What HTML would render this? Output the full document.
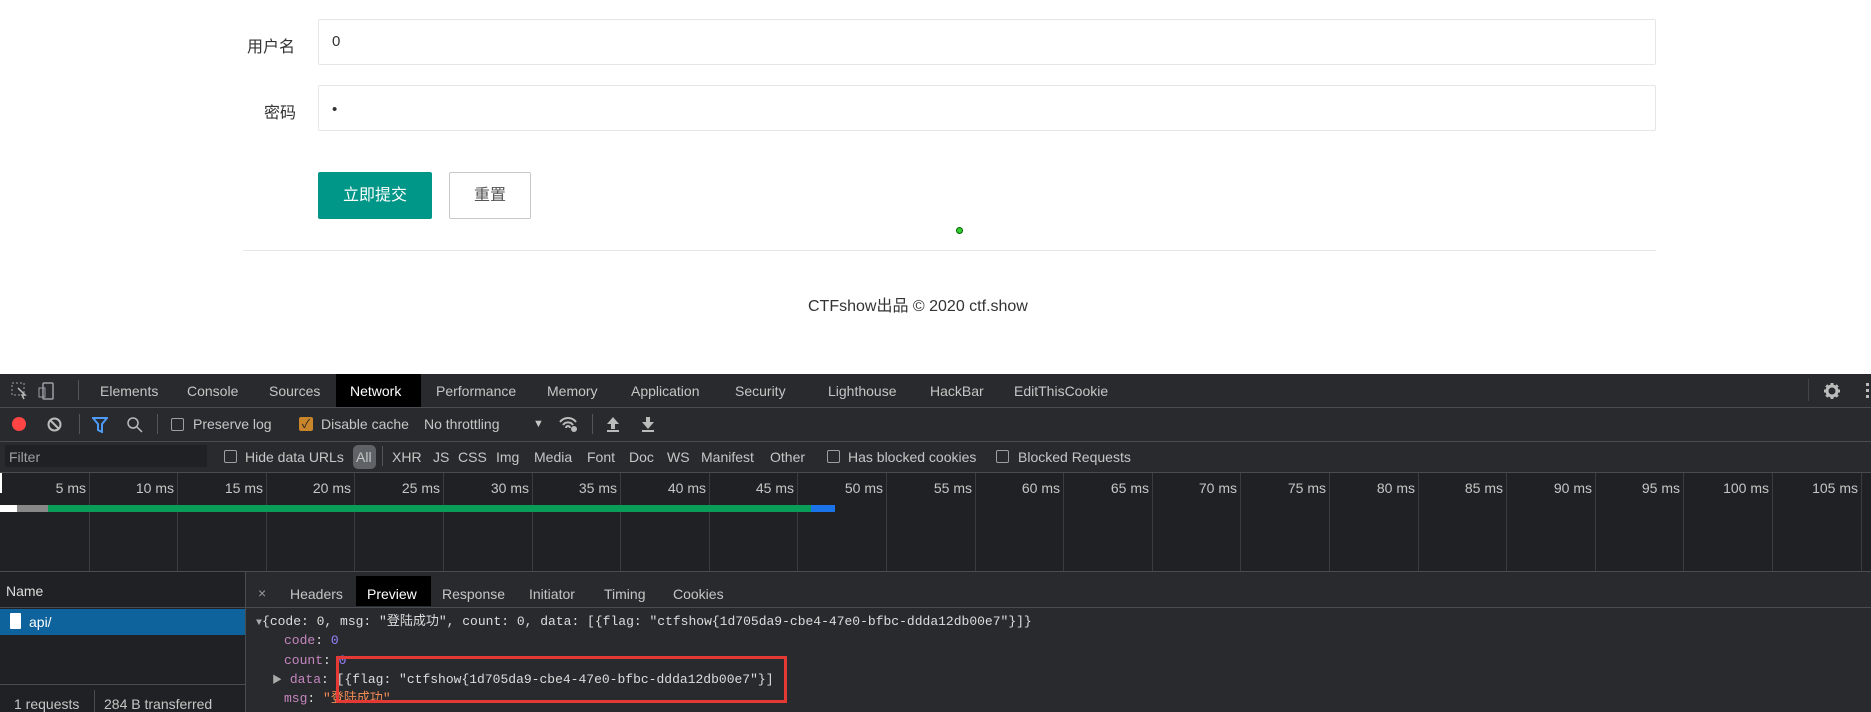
<!DOCTYPE html>
<html><head><meta charset="utf-8"><style>
*{margin:0;padding:0;box-sizing:border-box}
body{width:1871px;height:712px;overflow:hidden;background:#fff;font-family:"Liberation Sans","Noto Sans CJK SC",sans-serif;position:relative}
.a{position:absolute;white-space:nowrap}
.dt{position:absolute;left:0;top:374px;width:1871px;height:338px;background:#292a2d;color:#c4c7c5;font-size:14px}
.dt .a{line-height:1}
.hl{position:absolute;left:0;width:1871px;height:1px;background:#494c50}
.cb{position:absolute;width:13px;height:13px;border:1px solid #9aa0a6;border-radius:2px}
.mono{font-family:"Liberation Mono","Noto Sans CJK SC",monospace;font-size:13px}
</style></head><body>
<div class="a" style="left:247px;top:33px;font-size:16px;color:#333">用户名</div>
<div class="a" style="left:318px;top:19px;width:1338px;height:46px;border:1px solid #e6e6e6;border-radius:2px"></div>
<div class="a" style="left:332px;top:33px;font-size:15px;color:#333">0</div>
<div class="a" style="left:264px;top:99px;font-size:16px;color:#333">密码</div>
<div class="a" style="left:318px;top:85px;width:1338px;height:46px;border:1px solid #e6e6e6;border-radius:2px"></div>
<div class="a" style="left:332px;top:101px;font-size:15px;color:#333">•</div>
<div class="a" style="left:318px;top:172px;width:114px;height:47px;background:#009688;border-radius:2px;color:#fff;font-size:16px;text-align:center;line-height:47px">立即提交</div>
<div class="a" style="left:449px;top:172px;width:82px;height:47px;border:1px solid #c9c9c9;border-radius:2px;color:#555;font-size:16px;text-align:center;line-height:45px">重置</div>
<div class="a" style="left:956px;top:227px;width:7px;height:7px;border-radius:50%;background:#3c3;border:1px solid #060"></div>
<div class="a" style="left:243px;top:250px;width:1413px;height:1px;background:#e6e6e6"></div>
<div class="a" style="left:808px;top:292px;font-size:16px;color:#333">CTFshow出品 © 2020 ctf.show</div>

<div class="dt">
 <svg class="a" style="left:10px;top:8px" width="50" height="18"><rect x="2" y="1" width="12" height="12" fill="none" stroke="#9aa0a6" stroke-dasharray="2 2"/><path d="M8 6l7 7-3 0 2 4" stroke="#bbb" fill="none" stroke-width="1.5"/><rect x="33" y="1" width="10" height="16" rx="1" fill="none" stroke="#9aa0a6" stroke-width="1.5"/><rect x="29" y="6" width="6" height="9" fill="none" stroke="#9aa0a6"/></svg>
 <div class="a" style="left:78px;top:6px;width:1px;height:20px;background:#555"></div>
 <div class="a" style="left:336px;top:0;width:85px;height:33px;background:#000"></div>
 <div class="a" style="left:100px;top:10px">Elements</div>
 <div class="a" style="left:187px;top:10px">Console</div>
 <div class="a" style="left:269px;top:10px">Sources</div>
 <div class="a" style="left:350px;top:10px;color:#fff">Network</div>
 <div class="a" style="left:436px;top:10px">Performance</div>
 <div class="a" style="left:547px;top:10px">Memory</div>
 <div class="a" style="left:631px;top:10px">Application</div>
 <div class="a" style="left:735px;top:10px">Security</div>
 <div class="a" style="left:828px;top:10px">Lighthouse</div>
 <div class="a" style="left:930px;top:10px">HackBar</div>
 <div class="a" style="left:1014px;top:10px">EditThisCookie</div>
 <div class="a" style="left:1808px;top:5px;width:1px;height:22px;background:#444"></div>
 <svg class="a" style="left:1823px;top:8px" width="18" height="18" viewBox="0 0 18 18"><circle cx="9" cy="9" r="5" fill="none" stroke="#bbb" stroke-width="3"/><g stroke="#bbb" stroke-width="3"><path d="M9 1v3M9 14v3M1 9h3M14 9h3M3.3 3.3l2 2M12.7 12.7l2 2M3.3 14.7l2-2M12.7 5.3l2-2"/></g></svg>
 <div class="a" style="left:1866px;top:9px;width:3px;height:3px;background:#bbb;box-shadow:0 6px #bbb,0 12px #bbb"></div>
 <div class="hl" style="top:33px"></div>
 <div class="a" style="left:12px;top:43px;width:14px;height:14px;border-radius:50%;background:#f44"></div>
 <svg class="a" style="left:47px;top:43px" width="15" height="15"><circle cx="7.5" cy="7.5" r="6" fill="none" stroke="#bbb" stroke-width="2"/><path d="M3.5 3.5l8 8" stroke="#bbb" stroke-width="2"/></svg>
 <div class="a" style="left:79px;top:40px;width:1px;height:20px;background:#555"></div>
 <svg class="a" style="left:92px;top:43px" width="16" height="16"><path d="M1 1h14l-5 6v8l-4-2v-6z" fill="none" stroke="#4e9bf5" stroke-width="2"/></svg>
 <svg class="a" style="left:127px;top:43px" width="16" height="16"><circle cx="6" cy="6" r="5" fill="none" stroke="#bbb" stroke-width="1.5"/><path d="M10 10l5 5" stroke="#bbb" stroke-width="1.5"/></svg>
 <div class="a" style="left:157px;top:40px;width:1px;height:20px;background:#555"></div>
 <div class="cb" style="left:171px;top:44px"></div>
 <div class="a" style="left:193px;top:43px">Preserve log</div>
 <div class="a" style="left:299px;top:43px;width:14px;height:14px;background:#c8852a;border-radius:2px;color:#222;font-size:12px;text-align:center;line-height:14px">✓</div>
 <div class="a" style="left:321px;top:43px">Disable cache</div>
 <div class="a" style="left:424px;top:43px">No throttling</div>
 <div class="a" style="left:533px;top:45px;font-size:11px">▼</div>
 <svg class="a" style="left:558px;top:41px" width="22" height="18"><path d="M2 7a10 10 0 0 1 16 0M5 10a6 6 0 0 1 10 0M8 13a2 2 0 0 1 4 0" fill="none" stroke="#bbb" stroke-width="2"/><circle cx="16" cy="14" r="3" fill="#bbb"/></svg>
 <div class="a" style="left:592px;top:40px;width:1px;height:20px;background:#555"></div>
 <svg class="a" style="left:606px;top:42px" width="14" height="16"><path d="M7 1l6 7H9v5H5V8H1z" fill="#bbb"/><rect x="1" y="14" width="12" height="2" fill="#bbb"/></svg>
 <svg class="a" style="left:641px;top:42px" width="14" height="16"><path d="M7 13l6-7H9V1H5v5H1z" fill="#bbb"/><rect x="1" y="14" width="12" height="2" fill="#bbb"/></svg>
 <div class="hl" style="top:67px"></div>
 <div class="a" style="left:5px;top:71px;width:202px;height:22px;background:#202124"></div>
 <div class="a" style="left:9px;top:76px;color:#9aa0a6">Filter</div>
 <div class="cb" style="left:224px;top:76px"></div>
 <div class="a" style="left:245px;top:76px">Hide data URLs</div>
 <div class="a" style="left:353px;top:71px;width:23px;height:24px;background:#5f6368;border-radius:5px"></div>
 <div class="a" style="left:356px;top:76px">All</div>
 <div class="a" style="left:382px;top:72px;width:1px;height:20px;background:#555"></div>
 <div class="a" style="left:392px;top:76px">XHR</div>
 <div class="a" style="left:433px;top:76px">JS</div>
 <div class="a" style="left:458px;top:76px">CSS</div>
 <div class="a" style="left:496px;top:76px">Img</div>
 <div class="a" style="left:534px;top:76px">Media</div>
 <div class="a" style="left:587px;top:76px">Font</div>
 <div class="a" style="left:629px;top:76px">Doc</div>
 <div class="a" style="left:667px;top:76px">WS</div>
 <div class="a" style="left:701px;top:76px">Manifest</div>
 <div class="a" style="left:770px;top:76px">Other</div>
 <div class="cb" style="left:827px;top:76px"></div>
 <div class="a" style="left:848px;top:76px">Has blocked cookies</div>
 <div class="cb" style="left:996px;top:76px"></div>
 <div class="a" style="left:1018px;top:76px">Blocked Requests</div>
 <div class="hl" style="top:98px"></div>
 <div class="a" style="left:0;top:99px;width:1871px;height:98px;background:#202124"></div>
 <div class="a" style="left:0;top:99px;width:2px;height:20px;background:#fff"></div>
 <div id="ticks"></div>
 <div class="a" style="left:0;top:131px;width:835px;height:7px;background:#1a73e8"></div>
 <div class="a" style="left:0;top:131px;width:17px;height:7px;background:#fff"></div>
 <div class="a" style="left:17px;top:131px;width:31px;height:7px;background:#888"></div>
 <div class="a" style="left:48px;top:131px;width:763px;height:7px;background:#0a9d58"></div>
 <div class="hl" style="top:197px"></div>
 <div class="a" style="left:0;top:198px;width:245px;height:140px;background:#202124"></div>
 <div class="a" style="left:245px;top:198px;width:1px;height:140px;background:#494c50"></div>
 <div class="a" style="left:6px;top:210px;color:#ddd">Name</div>
 <div class="a" style="left:0;top:233px;width:245px;height:1px;background:#494c50"></div>
 <div class="a" style="left:0;top:235px;width:245px;height:26px;background:#0e639c"></div>
 <div class="a" style="left:10px;top:239px;width:11px;height:16px;background:#fff;border-radius:1px"></div>
 <div class="a" style="left:29px;top:241px;color:#fff">api/</div>
 <div class="a" style="left:0;top:310px;width:245px;height:1px;background:#494c50"></div>
 <div class="a" style="left:14px;top:323px">1 requests</div>
 <div class="a" style="left:94px;top:316px;width:1px;height:22px;background:#494c50"></div>
 <div class="a" style="left:104px;top:323px">284 B transferred</div>
 <div class="a" style="left:258px;top:212px;color:#999">×</div>
 <div class="a" style="left:290px;top:213px">Headers</div>
 <div class="a" style="left:356px;top:202px;width:75px;height:30px;background:#000"></div>
 <div class="a" style="left:367px;top:213px;color:#fff">Preview</div>
 <div class="a" style="left:442px;top:213px">Response</div>
 <div class="a" style="left:529px;top:213px">Initiator</div>
 <div class="a" style="left:604px;top:213px">Timing</div>
 <div class="a" style="left:673px;top:213px">Cookies</div>
 <div class="a" style="left:246px;top:233px;width:1625px;height:1px;background:#494c50"></div>
 <div class="a mono" style="left:256px;top:241px;color:#ddd"><span style="font-size:10px;color:#aaa">▼</span>{code: 0, msg: "登陆成功", count: 0, data: [{flag: "ctfshow{1d705da9-cbe4-47e0-bfbc-ddda12db00e7"}]}</div>
 <div class="a mono" style="left:284px;top:260px"><span style="color:#c586c0">code</span><span style="color:#ddd">: </span><span style="color:#9980ff">0</span></div>
 <div class="a mono" style="left:284px;top:280px"><span style="color:#c586c0">count</span><span style="color:#ddd">: </span><span style="color:#9980ff">0</span></div>
 <div class="a mono" style="left:272px;top:299px;color:#ddd"><span style="font-size:10px;color:#aaa">▶</span> <span style="color:#c586c0">data</span>: [{flag: "ctfshow{1d705da9-cbe4-47e0-bfbc-ddda12db00e7"}]</div>
 <div class="a mono" style="left:284px;top:318px"><span style="color:#c586c0">msg</span><span style="color:#ddd">: </span><span style="color:#f28b54">"登陆成功"</span></div>
 <div class="a" style="left:336px;top:282px;width:451px;height:47px;border:3px solid #e53935"></div>
</div>
<script>
var t=document.getElementById('ticks'),h='';
for(var i=1;i<=21;i++){var x=Math.round(88.6*i);
h+='<div class="a" style="left:'+x+'px;top:99px;width:1px;height:98px;background:#3c3c3c"></div><div class="a" style="left:'+(x-60)+'px;width:57px;text-align:right;top:107px">'+(5*i)+' ms</div>';}
t.innerHTML=h;
</script>
</body></html>
